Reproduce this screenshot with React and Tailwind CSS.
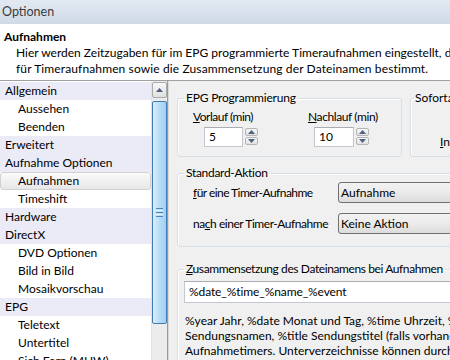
import React from 'react';

const tree = [
  { label: 'Allgemein', head: true },
  { label: 'Aussehen' },
  { label: 'Beenden' },
  { label: 'Erweitert', head: true },
  { label: 'Aufnahme Optionen', head: true },
  { label: 'Aufnahmen', selected: true },
  { label: 'Timeshift' },
  { label: 'Hardware', head: true },
  { label: 'DirectX', head: true },
  { label: 'DVD Optionen' },
  { label: 'Bild in Bild' },
  { label: 'Mosaikvorschau' },
  { label: 'EPG', head: true },
  { label: 'Teletext' },
  { label: 'Untertitel' },
  { label: 'Sich Fern (MHW)' },
];

const Arrow = ({ down }) => (
  <svg width="7" height="4" viewBox="0 0 7 4">
    {down ? <path d="M0 0h7L3.5 4z" fill="#4d6185" /> : <path d="M0 4h7L3.5 0z" fill="#4d6185" />}
  </svg>
);

const Spinner = () => (
  <div className="flex flex-col gap-px ml-[2px] pt-[1px]">
    <div className="w-[13px] h-[8px] rounded-[2px] border border-[#b5b5b5] bg-gradient-to-b from-[#f7f7f7] to-[#e2e2e2] flex items-center justify-center">
      <Arrow />
    </div>
    <div className="w-[13px] h-[8px] rounded-[2px] border border-[#b5b5b5] bg-gradient-to-b from-[#f7f7f7] to-[#e2e2e2] flex items-center justify-center">
      <Arrow down />
    </div>
  </div>
);

const Combo = ({ value }) => (
  <div className="w-[130px] h-[21px] rounded-[3px] border border-[#707070] bg-gradient-to-b from-[#f2f2f2] via-[#ebebeb] to-[#dcdcdc] pl-[2px] leading-[19px]">
    {value}
  </div>
);

const groupBox = 'rounded-[3px] border border-[#d5dfe5] shadow-[inset_1px_1px_0_#ffffff]';

export default function App() {
  return (
    <div className="w-[450px] h-[360px] overflow-hidden bg-white text-[12px] text-black [font-family:Lato,sans-serif] flex flex-col">
      <div className="h-[24px] shrink-0 bg-gradient-to-b from-[#e2e9f2] to-[#cfdae7] pl-[2px] leading-[24px] text-[#3c3c3c] text-[12.5px]">
        Optionen
      </div>

      <div className="h-[57px] shrink-0 border-b border-[#a0a0a0] pt-[5px] leading-[16px] whitespace-nowrap">
        <div className="pl-[4px] font-bold">Aufnahmen</div>
        <div className="pl-[16px]">Hier werden Zeitzugaben für im EPG programmierte Timeraufnahmen eingestellt, die Standard-Aktion</div>
        <div className="pl-[16px] tracking-[0.12px]">für Timeraufnahmen sowie die Zusammensetzung der Dateinamen bestimmt.</div>
      </div>

      <div className="flex flex-1 min-h-0">
        <div className="w-[168px] shrink-0 flex border-r border-[#9a9a9a] bg-white">
          <div className="flex-1 min-w-0 pt-[1px] whitespace-nowrap overflow-hidden">
            {tree.map((item) =>
              item.selected ? (
                <div
                  key={item.label}
                  className="h-[18px] rounded-[3px] border border-[#d2d2d2] bg-gradient-to-b from-[#fafafa] to-[#e7e7e7] pl-[17px] leading-[16px]"
                >
                  {item.label}
                </div>
              ) : (
                <div
                  key={item.label}
                  className={`h-[18px] leading-[18px] ${item.head ? 'bg-[#ebebf8] pl-[5px]' : 'pl-[18px]'}`}
                >
                  {item.label}
                </div>
              )
            )}
          </div>
          <div className="w-[16px] shrink-0 bg-[#ececec] border-l border-[#e2e2e2] flex flex-col items-center pt-[1px]">
            <div className="w-[15px] h-[16px] rounded-[2px] border border-[#a9a9a9] bg-gradient-to-b from-[#f7f7f7] to-[#e0e0e0] flex items-center justify-center">
              <Arrow />
            </div>
            <div className="mt-[3px] w-[15px] h-[223px] rounded-[2px] border border-[#3f7db3] bg-gradient-to-r from-[#dcedfb] via-[#b6dcf7] to-[#a3d0f2] flex flex-col items-center justify-center gap-[1px]">
              <div className="w-[7px] h-[1px] bg-[#4a87bd]" />
              <div className="w-[7px] h-[1px] bg-[#e8f4fd]" />
              <div className="w-[7px] h-[1px] bg-[#4a87bd]" />
              <div className="w-[7px] h-[1px] bg-[#e8f4fd]" />
              <div className="w-[7px] h-[1px] bg-[#4a87bd]" />
            </div>
          </div>
        </div>

        <div className="flex-1 min-w-0 bg-[#f0f0f0] border-l border-[#dadada] pl-[8px] whitespace-nowrap">
          <div className="flex gap-[8px] mt-[9px] w-[400px]">
            <fieldset className={`w-[225px] shrink-0 pb-[9px] ${groupBox}`}>
              <legend className="ml-[6px] px-[2px] leading-[16px] tracking-[-0.2px]">EPG Programmierung</legend>
              <div className="flex mt-[3px] pl-[15px]">
                <div className="w-[115px]">
                  <div className="leading-[16px] tracking-[-0.5px]">
                    <span className="underline">V</span>orlauf (min)
                  </div>
                  <div className="flex mt-[2px] ml-[11px]">
                    <div className="w-[39px] h-[20px] border border-[#c3c8d0] border-t-[#abadb3] bg-white pl-[4px] leading-[18px]">5</div>
                    <Spinner />
                  </div>
                </div>
                <div>
                  <div className="leading-[16px] tracking-[-0.4px]">
                    <span className="underline">N</span>achlauf (min)
                  </div>
                  <div className="flex mt-[2px] ml-[6px]">
                    <div className="w-[40px] h-[20px] border border-[#c3c8d0] border-t-[#abadb3] bg-white pl-[4px] leading-[18px]">10</div>
                    <Spinner />
                  </div>
                </div>
              </div>
            </fieldset>
            <fieldset className={`w-[160px] shrink-0 ${groupBox}`}>
              <legend className="ml-[3px] px-[1px] leading-[16px]">Sofortaufnahme</legend>
              <div className="mt-[28px] pl-[29px] leading-[16px]">
                <span className="underline">I</span>ntervall (min)
              </div>
            </fieldset>
          </div>

          <fieldset className={`mt-[8px] w-[320px] pb-[12px] ${groupBox}`}>
            <legend className="ml-[6px] px-[2px] leading-[16px] tracking-[-0.3px]">Standard-Aktion</legend>
            <div className="flex items-center mt-[1px] pl-[15px]">
              <div className="w-[145px] shrink-0 tracking-[-0.55px]">
                <span className="underline">f</span>ür eine Timer-Aufnahme
              </div>
              <Combo value="Aufnahme" />
            </div>
            <div className="flex items-center mt-[10px] pl-[15px]">
              <div className="w-[145px] shrink-0 tracking-[-0.45px]">
                na<span className="underline">c</span>h einer Timer-Aufnahme
              </div>
              <Combo value="Keine Aktion" />
            </div>
          </fieldset>

          <fieldset className={`mt-[14px] w-[320px] pb-[10px] ${groupBox}`}>
            <legend className="ml-[6px] px-[2px] leading-[16px] tracking-[-0.4px]">
              <span className="underline">Z</span>usammensetzung des Dateinamens bei Aufnahmen
            </legend>
            <div className="px-[6px] mt-[4px]">
              <div className="h-[22px] border border-[#c3c8d0] border-t-[#abadb3] bg-white pl-[4px] leading-[20px] tracking-[-0.1px]">
                %date_%time_%name_%event
              </div>
              <div className="mt-[10px] pl-[1px] leading-[15px]">
                <div>%year Jahr, %date Monat und Tag, %time Uhrzeit, %name Kanalname,</div>
                <div>Sendungsnamen, %title Sendungstitel (falls vorhanden) und %event</div>
                <div>Aufnahmetimers. Unterverzeichnisse können durch das Zeichen</div>
              </div>
            </div>
          </fieldset>
        </div>
      </div>
    </div>
  );
}
